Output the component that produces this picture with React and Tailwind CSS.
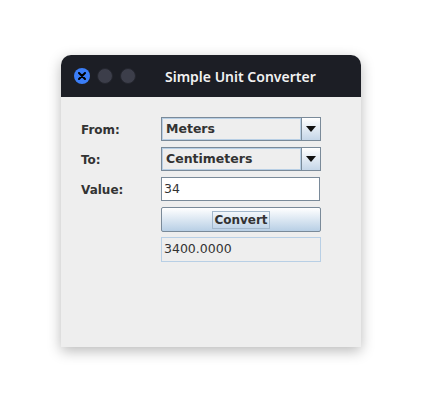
const java = { fontFamily: '"DejaVu Sans", sans-serif' };

function Arrow() {
  return (
    <svg width="10" height="6" viewBox="0 0 10 6">
      <path d="M0 0 H10 L5 6 Z" fill="#111" />
    </svg>
  );
}

function Combo({ value }) {
  return (
    <div className="flex h-[24px] w-[160px] border border-[#7a8a99] bg-[#eeeeee]">
      <div className="flex flex-1 items-center border border-[#b8cfe5] pl-[3px] text-[12.5px] font-bold text-[#333333]">
        {value}
      </div>
      <div className="flex w-[19px] items-center justify-center border-l border-[#7a8a99] bg-gradient-to-b from-white to-[#c5d6e8]">
        <Arrow />
      </div>
    </div>
  );
}

export default function App() {
  return (
    <div className="flex h-[414px] w-[422px] justify-start bg-white" style={java}>
      <div className="ml-[61px] mt-[55px] flex h-[292px] w-[300px] flex-col overflow-hidden rounded-t-[10px] shadow-[0_4px_14px_rgba(0,0,0,0.28)]">
        <div className="relative flex h-[42px] items-center bg-[#1c1e25]">
          <div className="flex items-center gap-[7px] pl-[13px]">
            <div className="flex h-[16px] w-[16px] items-center justify-center rounded-full bg-[#3b7ef8]">
              <svg width="8" height="8" viewBox="0 0 8 8">
                <path d="M1 1 L7 7 M7 1 L1 7" stroke="#000" strokeWidth="2" strokeLinecap="round" />
              </svg>
            </div>
            <div className="h-[16px] w-[16px] rounded-full border border-[#24262e] bg-[#3c3e4a]" />
            <div className="h-[16px] w-[16px] rounded-full border border-[#24262e] bg-[#3c3e4a]" />
          </div>
          <div
            className="ml-[29px] text-[14px] font-semibold text-[#f2f2f2]"
            style={{ fontFamily: '"Noto Sans", sans-serif' }}
          >
            Simple Unit Converter
          </div>
        </div>
        <div className="flex flex-1 flex-col gap-[6px] bg-[#eeeeee] pl-[20px] pt-[20px]">
          <div className="flex items-center">
            <div className="w-[80px] pt-[1px] text-[12px] font-bold text-[#333333]">From:</div>
            <Combo value="Meters" />
          </div>
          <div className="flex items-center">
            <div className="w-[80px] pt-[1px] text-[12px] font-bold text-[#333333]">To:</div>
            <Combo value="Centimeters" />
          </div>
          <div className="flex items-center">
            <div className="w-[80px] pt-[1px] text-[12px] font-bold text-[#333333]">Value:</div>
            <div className="flex h-[24px] w-[159px] items-center border border-[#7a8a99] bg-white pl-[2px] text-[12.5px] text-[#333333]">
              34
            </div>
          </div>
          <div className="flex items-center">
            <div className="w-[80px]" />
            <div className="flex h-[25px] w-[160px] items-center justify-center rounded-[2px] border border-[#7a8a99] bg-gradient-to-b from-white to-[#b8cfe5]">
              <span className="border border-[#a3b8cc] px-[1px] text-[12px] font-bold leading-[16px] text-[#333333]">
                Convert
              </span>
            </div>
          </div>
          <div className="-mt-[1px] flex items-center">
            <div className="w-[80px]" />
            <div className="flex h-[25px] w-[160px] items-center border border-[#b8cfe5] bg-[#eeeeee] pl-[2px] text-[12.5px] text-[#333333]">
              3400.0000
            </div>
          </div>
        </div>
      </div>
    </div>
  );
}
